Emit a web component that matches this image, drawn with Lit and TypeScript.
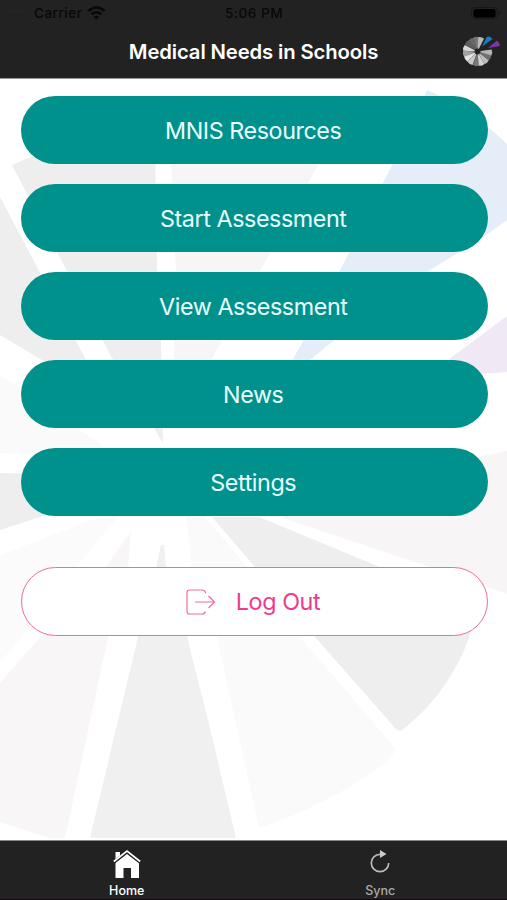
import { LitElement, html, svg, css } from "lit";
import { customElement } from "lit/decorators.js";

const petals: [string, string][] = [
  ["#eeeeee", "M12 165 L25 159 Q80 143 155 137 L157 272 L161 341 L163 443 L154 428 L113 360 Z"],
  ["#f7f5f6", "M170 138 Q260 128 325 152 L270 253 L211 360 L169 430 L174 360 L176 272 Z"],
  ["#e5edf9", "M427 90 L452 101 Q480 118 507 144 V220 L485 236 L427 272 L333 341 L310 360 L275 392 L303 341 L349 253 L392 165 Z"],
  ["#f0e8f5", "M507 316 L448 360 L420 385 L480 374 L507 372 Z"],
  ["#eeeeee", "M0 197 L86 360 L120 420 L42 360 L0 335 Z"],
  ["#fafafa", "M0 375 L95 440 L115 456 L0 453 Z"],
  ["#eeeeee", "M0 473 L120 476 L100 497 L37 518 L0 530 Z"],
  ["#fbfbfb", "M0 555 L100 517 L118 517 L75 568 L22 637 L0 662 Z"],
  ["#f8f6f7", "M0 683 L37 641 L105 568 L131 531 L128 568 L108 637 L65 838 H50 L0 822 Z"],
  ["#f0f0f0", "M161 545 H164 L166 568 L187 637 L208 720 L236 838 H90 L138 637 L156 568 Z"],
  ["#fafafa", "M186 517 L205 517 L248 568 L300 637 L395 748 Q394 758 380 767 Q325 806 259 828 L217 637 L192 568 Z"],
  ["#eeeeee", "M212 517 H259 L380 567 L478 600 Q471 653 435 698 Q418 718 402 730 Q399 732 396 729 L315 637 L255 567 Z"],
  ["#f7f5f6", "M507 451 L487 455 L300 495 L283 518 L430 567 L507 594 Z"],
];

const blades: [number, string][] = [
  [-5, "#777"], [-27, "#686868"], [-50, "#5e5e5e"], [-75, "#d8d8d8"], [-99, "#a2a2a2"],
  [-123, "#e3e3e3"], [-148, "#c9c9c9"], [-173, "#777"], [163, "#d2d2d2"], [139, "#bdbdbd"],
  [117, "#707070"], [94, "#b5b5b5"], [15, "#b9b9b9"],
];

@customElement("menu-button")
class MenuButton extends LitElement {
  static styles = css`
    :host { display: block; }
    .pill {
      box-sizing: border-box; display: flex; width: 100%; height: 68px; align-items: center;
      justify-content: center; border: 0; border-radius: 34px; background: #00918d; color: #e9ffff;
      padding: 2px 1.5px 0 0; font: 400 23.3px/28px Inter, sans-serif; letter-spacing: -.42px;
    }
  `;
  render() { return html`<button class="pill"><slot></slot></button>`; }
}

@customElement("app-root")
class AppRoot extends LitElement {
  static styles = css`
    :host { display: flex; flex-direction: column; height: 900px; font-family: Inter, sans-serif; background: #fff; overflow: hidden; }
    svg { display: block; }
    .top { height: 78px; background: #222; border-bottom: 1px solid #999; flex: none; }
    .status { display: grid; grid-template-columns: 1fr auto 1fr; height: 26px; align-items: center; padding: 0 5px 0 10px; color: #080808; font: 500 13.6px/16px Inter, sans-serif; }
    .carrier { display: flex; align-items: center; letter-spacing: .45px; }
    .dots { width: 24px; font-size: 9px; color: #171717; }
    .wifi { margin-left: 5px; }
    .clock { letter-spacing: .5px; margin-right: 4px; }
    .battery { justify-self: end; }
    .nav { display: grid; grid-template-columns: 48px 1fr 48px; height: 52px; align-items: center; }
    .title { grid-column: 2; text-align: center; color: #fff; font: 600 20.3px/24px Inter, sans-serif; letter-spacing: -.13px; white-space: nowrap; }
    .body { position: relative; flex: 1; min-height: 0; }
    .petals { position: absolute; inset: 0; }
    .list { position: relative; display: flex; flex-direction: column; gap: 20px; padding: 17px 19.5px 0 20.5px; }
    .logout {
      box-sizing: border-box; height: 69px; margin-top: 31px; border: 1.5px solid #ee69a6; border-radius: 35px;
      background: #fff; display: flex; align-items: center; justify-content: center; gap: 20px; color: #ee3b8b;
      font: 400 23.3px/28px Inter, sans-serif; letter-spacing: -.42px; padding: 1px 2px 0 0;
    }
    .tabs { display: grid; grid-template-columns: 1fr 1fr; height: 60px; background: #222; border-top: 1px solid #888; border-bottom: 1px solid #150c12; box-sizing: border-box; flex: none; }
    .tab { display: flex; flex-direction: column; align-items: center; padding-top: 8px; color: #aaa; font: 500 12.5px/16px Inter, sans-serif; gap: 3px; }
    .active { color: #fff; }
  `;
  render() {
    return html`
      <header class="top">
        <div class="status">
          <div class="carrier"><span class="dots">....</span><span>Carrier</span>
            <svg class="wifi" width="19" height="14" viewBox="0 0 19 14" fill="none" stroke="#080808" stroke-width="2.5">
              <path d="M1.3 5Q9.5-2 17.7 5M4.5 8.3q5-4 10 0" /><path d="M6.8 10.7q2.7-2 5.4 0L9.5 13.5Z" fill="#080808" stroke="none" />
            </svg>
          </div>
          <span class="clock">5:06 PM</span>
          <svg class="battery" width="32" height="14" viewBox="0 0 32 14">
            <rect x="1.5" y="1.5" width="26" height="11" rx="3.5" fill="none" stroke="#171717" />
            <rect x="3.5" y="3" width="22" height="8.5" rx="2" fill="#000" /><path d="M29 5.5q2 1.5 0 3z" fill="#101010" />
          </svg>
        </div>
        <div class="nav"><span class="title">Medical Needs in Schools</span>
          <svg width="44" height="40" viewBox="459 31 44 40">
            ${blades.map(([a, c]) => svg`<path d="M-.6-3 L-3-14 Q0-15.5 3-14 L.6-3Z" fill=${c} transform=${`translate(477.5 50.5) rotate(${a})`} />`)}
            <path d="M482 45.5 L486.5 36.5 Q489 34 492.5 38Z" fill="#1380c4" />
            <path d="M488 47 L497 39.5 Q499.5 41.5 500 45Z" fill="#7b35a8" />
          </svg>
        </div>
      </header>
      <main class="body">
        <svg class="petals" width="507" height="761" viewBox="0 79 507 761">
          ${petals.map(([c, d]) => svg`<path fill=${c} d=${d} />`)}
        </svg>
        <div class="list">
          ${["MNIS Resources", "Start Assessment", "View Assessment", "News", "Settings"].map((t) => html`<menu-button>${t}</menu-button>`)}
          <button class="logout">
            <svg width="30" height="26" viewBox="0 0 30 26" fill="none" stroke="#f26aa3" stroke-width="1.2">
              <path d="M19.5 4.2V3.5Q18.5 1 16 1H3.5Q1 1 1 3.5V22.5Q1 25 3.5 25H16Q18.5 25 19.5 22.5M9 13H28.5M22.5 7L28.5 13L22.5 19" />
            </svg>
            <span>Log Out</span>
          </button>
        </div>
      </main>
      <nav class="tabs">
        <div class="tab active">
          <svg width="28" height="31" viewBox="0 0 28 31">
            <path fill="#fff" d="M2.5 13.5L14 4.5L26 13.5V29H18V19H10.5V29H2.5Z" />
            <path fill="#fff" d="M2.5 3H7V8L2.5 11.5Z" />
            <path fill="none" stroke="#222" stroke-width="3" d="M.5 13.5L14 3L27.5 13.5" />
            <path fill="none" stroke="#fff" stroke-width="1.6" d="M.8 12.5L14 2L27.2 12.5" />
          </svg>
          <span>Home</span>
        </div>
        <div class="tab">
          <svg width="22" height="31" viewBox="0 0 22 31">
            <path fill="none" stroke="#bbb" stroke-width="1.7" d="M11 5.3A8.7 8.7 0 1 0 19.7 14" /><path fill="#ccc" d="M11 1L17.5 5L11 9Z" />
          </svg>
          <span>Sync</span>
        </div>
      </nav>
    `;
  }
}
